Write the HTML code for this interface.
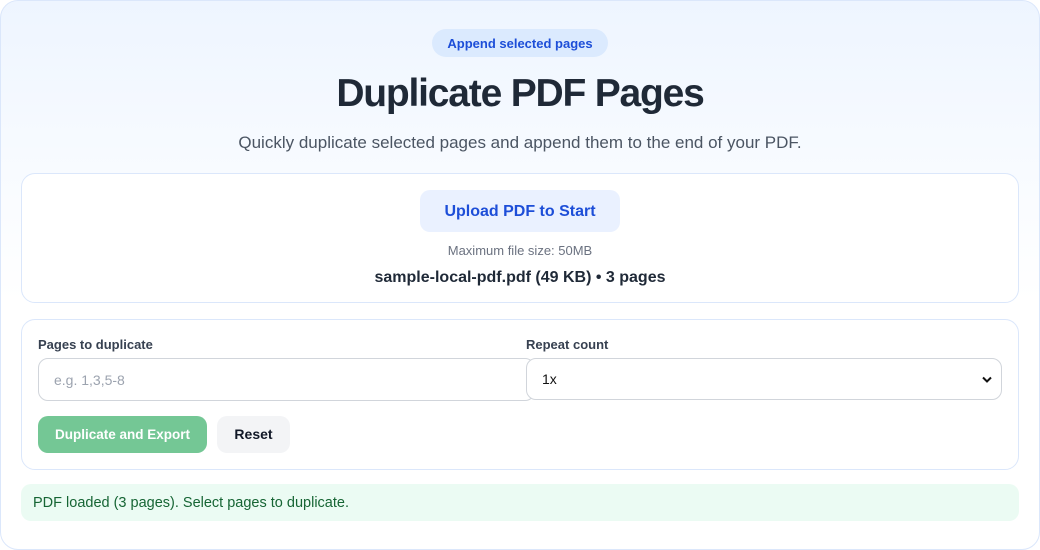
<!DOCTYPE html>
<html><head><style>
*{box-sizing:border-box;margin:0;padding:0}
body{width:1040px;height:550px;font-family:"Liberation Sans",sans-serif;background:#fff;position:relative;overflow:hidden}
.outer{position:absolute;left:0;top:0;width:1040px;height:550px;border:1px solid #dbe7fb;border-radius:18px;background:linear-gradient(#eef5ff 0px,#f8fbff 170px,#fff 300px)}
.abs{position:absolute}
.badge{left:432px;top:29px;width:176px;height:28px;border-radius:14px;background:#dbeafe;color:#1d4ed8;font-weight:bold;font-size:13px;line-height:29px;text-align:center}
h1{position:absolute;left:0;width:1040px;top:69px;text-align:center;font-size:39px;font-weight:bold;color:#1f2937;letter-spacing:-1.2px;line-height:50px}
.sub{left:0;width:1040px;top:132px;text-align:center;font-size:17px;color:#4b5563;line-height:22px}
.card{left:21px;width:998px;background:#fff;border:1px solid #dbe7fb;border-radius:14px}
.up{left:420px;top:190px;width:200px;height:42px;border-radius:10px;background:#eaf1ff;color:#1d4ed8;font-weight:bold;font-size:16px;line-height:43px;text-align:center}
.lbl{font-size:13px;font-weight:bold;color:#374151}
.inp{border:1px solid #d1d5db;border-radius:10px;background:#fff;font-size:14px;padding-left:15px;line-height:42px}
</style></head><body>
<div class="outer"></div>
<div class="abs badge">Append selected pages</div>
<h1>Duplicate PDF Pages</h1>
<div class="abs sub">Quickly duplicate selected pages and append them to the end of your PDF.</div>
<div class="abs card" style="top:173px;height:130px"></div>
<div class="abs up">Upload PDF to Start</div>
<div class="abs" style="left:0;width:1040px;top:243px;text-align:center;font-size:13px;color:#6b7280">Maximum file size: 50MB</div>
<div class="abs" style="left:0;width:1040px;top:269px;text-align:center;font-size:16px;font-weight:bold;color:#1f2937">sample-local-pdf.pdf (49 KB) • 3 pages</div>
<div class="abs card" style="top:319px;height:151px"></div>
<div class="abs lbl" style="left:38px;top:337px">Pages to duplicate</div>
<div class="abs lbl" style="left:526px;top:337px">Repeat count</div>
<div class="abs inp" style="left:38px;top:358px;width:497px;height:43px;color:#9ca3af">e.g. 1,3,5-8</div>
<div class="abs inp" style="left:526px;top:358px;width:476px;height:42px;color:#111;line-height:40px">1x
<svg style="position:absolute;right:9px;top:17px" width="10" height="7" viewBox="0 0 10 7"><path d="M1 1.5L5 5.5L9 1.5" stroke="#111" stroke-width="2" fill="none"/></svg></div>
<div class="abs" style="left:38px;top:416px;width:169px;height:37px;border-radius:10px;background:#74c795;color:#fff;font-weight:bold;font-size:13.5px;line-height:37px;text-align:center">Duplicate and Export</div>
<div class="abs" style="left:217px;top:416px;width:73px;height:37px;border-radius:10px;background:#f3f4f6;color:#111827;font-weight:bold;font-size:14px;line-height:37px;text-align:center">Reset</div>
<div class="abs" style="left:21px;top:484px;width:998px;height:37px;border-radius:10px;background:#ebfbf3;color:#166534;font-size:14.5px;line-height:38px;padding-left:12px">PDF loaded (3 pages). Select pages to duplicate.</div>
</body></html>
